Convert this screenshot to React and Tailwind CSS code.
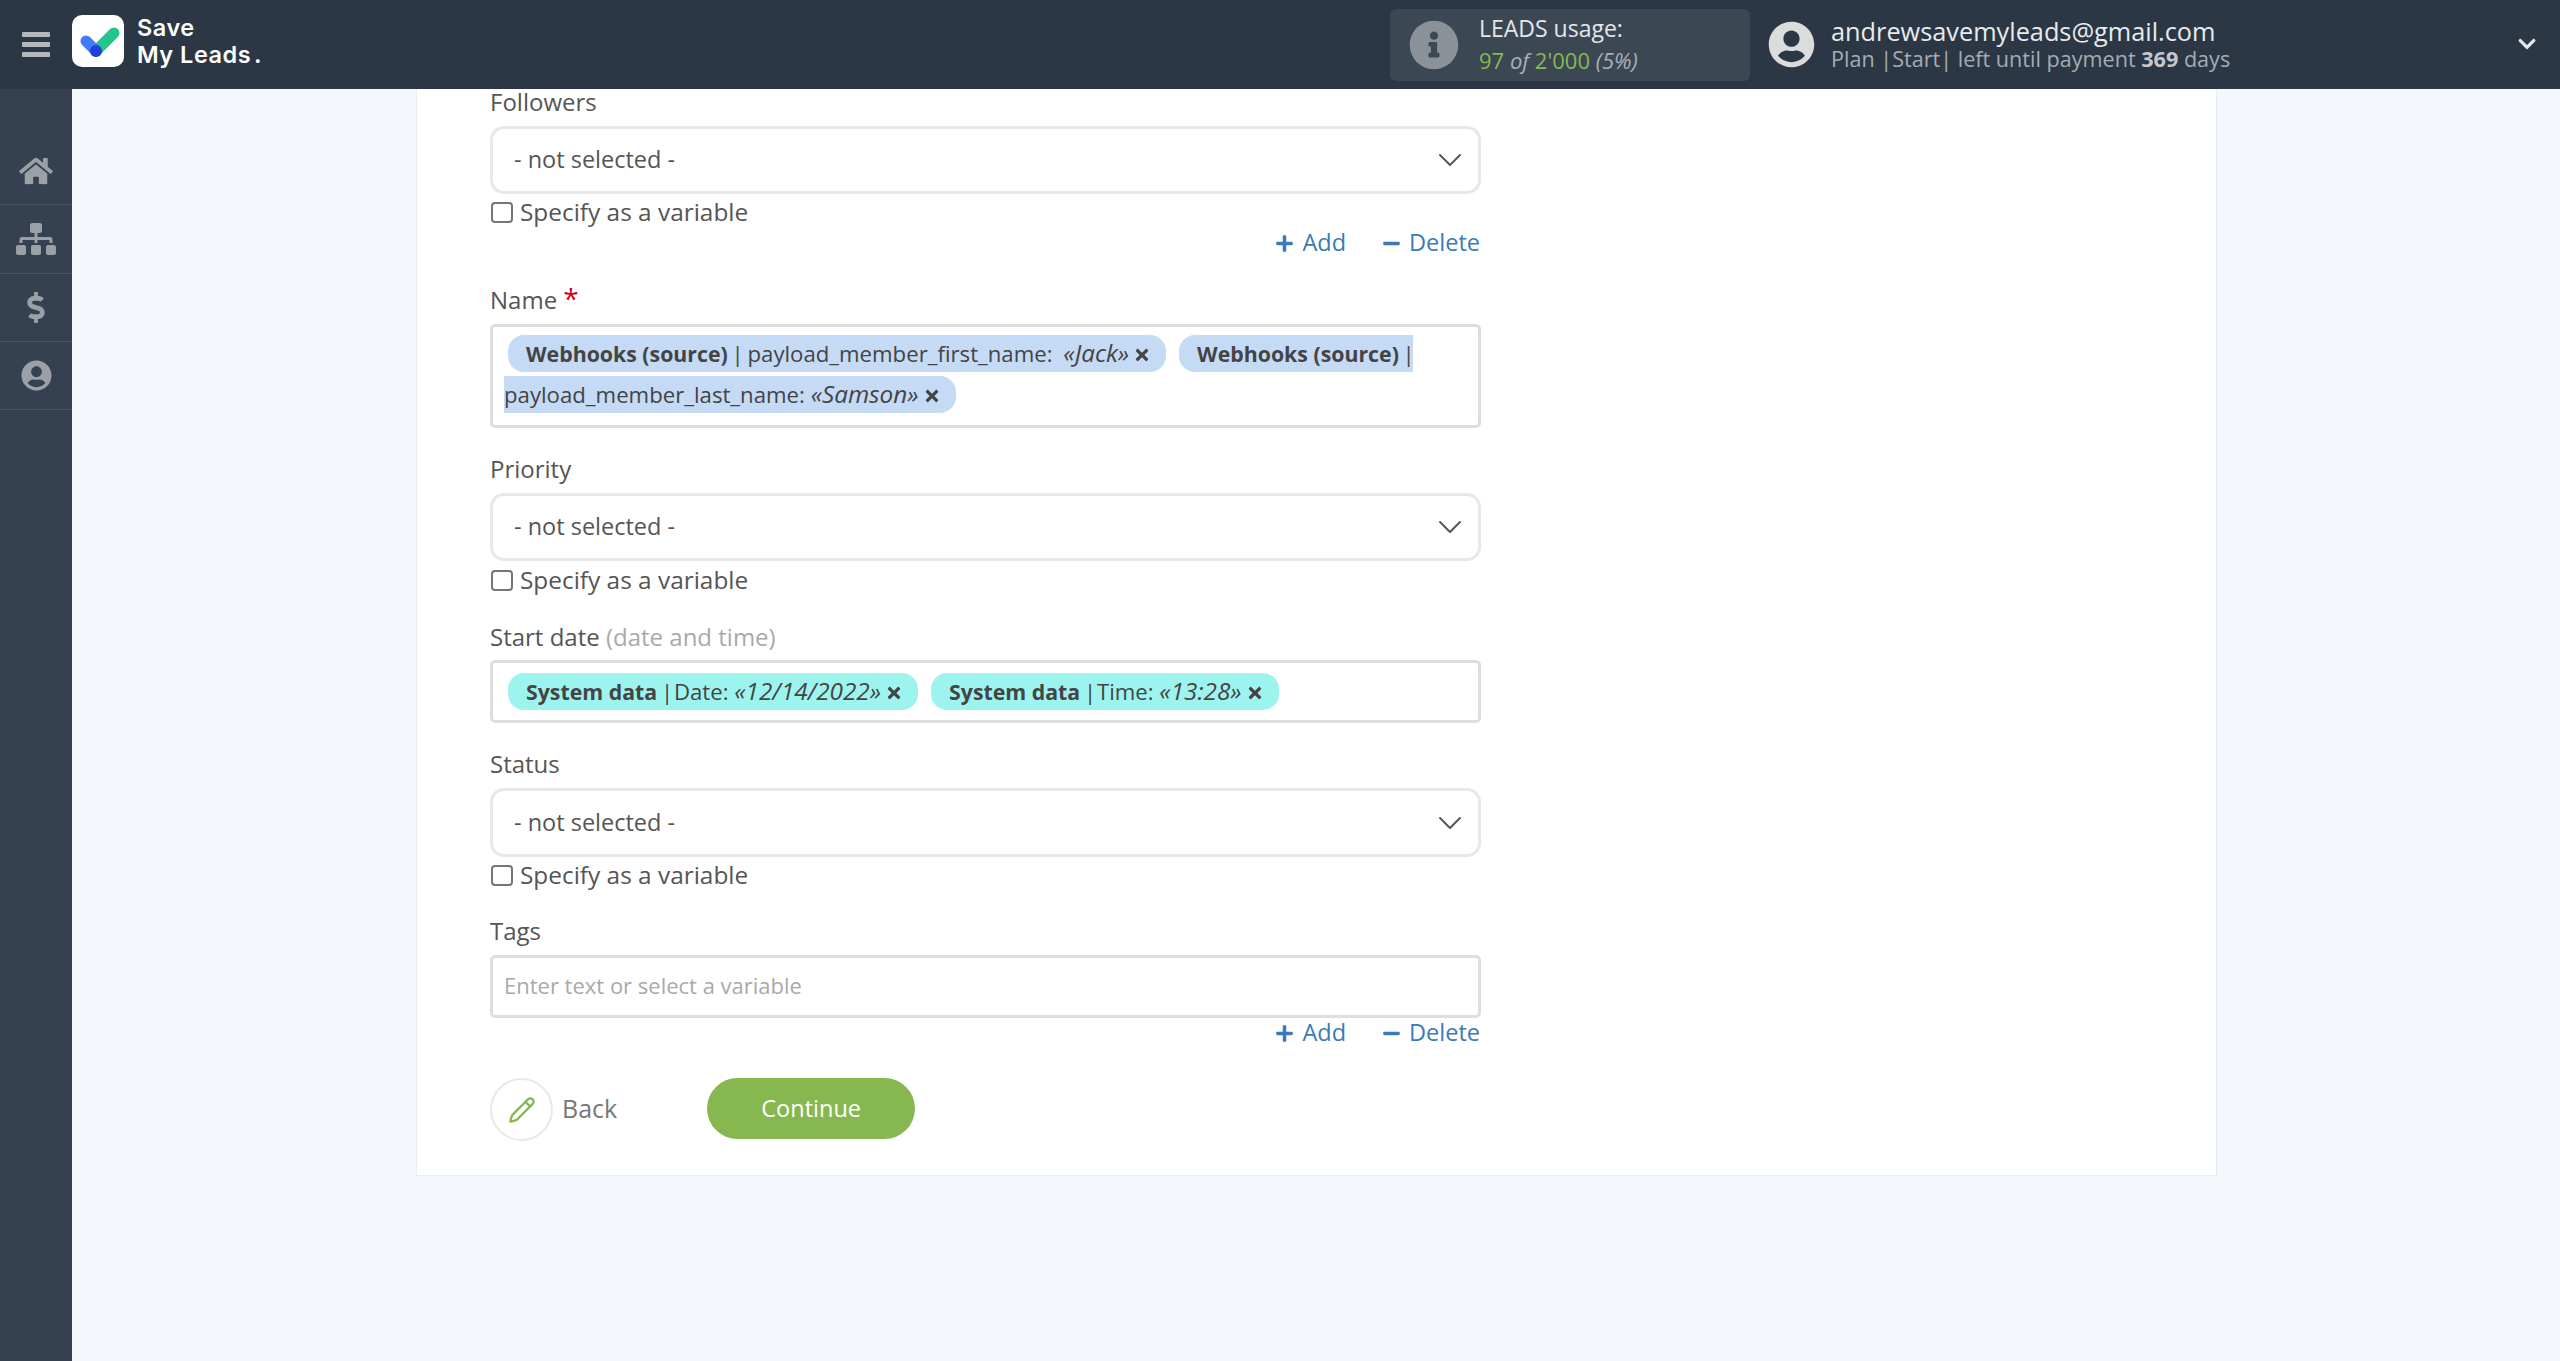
import React from "react";
import { FaHome, FaSitemap, FaDollarSign, FaUserCircle, FaInfoCircle, FaPlus, FaMinus, FaTimes, FaChevronDown } from "react-icons/fa";
import { ChevronDown, Pencil } from "lucide-react";

function Select({ className = "" }) {
  return (
    <div className={`rounded-[14px] border-[3px] border-[#e8e8e8] bg-white flex items-center justify-between pl-[21px] pr-[8px] text-[#555] ${className}`}>
      <span className="text-[23.5px]">- not selected -</span>
      <ChevronDown size={40} strokeWidth={1.15} className="text-[#555]" />
    </div>
  );
}

function Check({ className = "mt-[3px]" }) {
  return (
    <label className={`h-[32px] flex items-center text-[#555] text-[24.4px] ${className}`}>
      <span className="w-[22px] h-[21px] rounded-[4px] border-2 border-[#767676] bg-white ml-[1px] mr-[7px]" />
      Specify as a variable
    </label>
  );
}

function AddDelete({ className = "" }) {
  return (
    <div className={`h-[28px] flex items-center justify-end pr-[1px] text-[#3b7ab8] text-[23.5px] ${className}`}>
      <FaPlus className="w-[19px] h-[19px] mr-[8px]" />
      <span>Add</span>
      <FaMinus className="w-[19px] h-[19px] ml-[36px] mr-[8px]" />
      <span>Delete</span>
    </div>
  );
}

function Label({ children, className = "" }) {
  return <div className={`h-[32px] leading-[32px] text-[24px] text-[#555] ${className}`}>{children}</div>;
}

function Chip({ bg, source, field, value, valueClass = "", fieldClass = "" }) {
  return (
    <span className={`${bg} inline rounded-[16px] py-[3px] pl-[18px] pr-[16px] ml-[4px] mr-[9px] text-[22.2px] text-[#444] box-decoration-slice`}>
      <b className="font-bold text-[21.3px]">{source}</b> <span className="mx-[-2px]">|</span> <span className={fieldClass}>{field}:</span> <i className={`text-[24.3px] ${valueClass}`}>«{value}»</i>
      <FaTimes className="inline w-[16px] h-[18px] ml-[5px] mb-[2px]" />
    </span>
  );
}

function Box({ className = "", children }) {
  return <div className={`rounded-[5px] border-[3px] border-[#dedede] bg-white px-[11px] ${className}`}>{children}</div>;
}

export default function App() {
  return (
    <div className="h-[1361px] w-[2560px] flex flex-col overflow-hidden bg-[#f4f7fc] font-['Open_Sans',sans-serif]">
      <header className="relative z-10 h-[89px] shrink-0 bg-[#2b3744] flex items-center">
        <div className="w-[72px] flex flex-col items-center gap-[5px]">
          <span className="block w-[28px] h-[5px] bg-[#b3b8bd] rounded-[1px]" />
          <span className="block w-[28px] h-[5px] bg-[#b3b8bd] rounded-[1px]" />
          <span className="block w-[28px] h-[5px] bg-[#b3b8bd] rounded-[1px]" />
        </div>
        <div className="w-[52px] h-[52px] rounded-[10px] bg-white flex items-center justify-center mb-[7px]">
          <svg width="52" height="52" viewBox="0 0 52 52">
            <line x1="24" y1="36" x2="42" y2="18" stroke="#22c58b" strokeWidth="11" strokeLinecap="round" />
            <line x1="14" y1="26" x2="24" y2="36" stroke="#3f7bfb" strokeWidth="11" strokeLinecap="round" />
            <circle cx="24" cy="36" r="6" fill="#1f3fd6" />
          </svg>
        </div>
        <div className="ml-[13px] mb-[7px] font-['Inter',sans-serif] font-semibold text-white text-[23.5px] leading-[27px] tracking-[0.5px]">
          <div>Save</div>
          <div>My Leads<span className="ml-[3px]">.</span></div>
        </div>
        <div className="flex-1" />
        <div className="w-[360px] h-[72px] rounded-[6px] bg-[#3b4853] flex items-center mr-[18px]">
          <FaInfoCircle className="ml-[19px] w-[50px] h-[50px] text-[#8a9298]" />
          <div className="ml-[20px] leading-[30px]">
            <div className="text-[#e4e6e8] text-[23px] mt-[-2px] mb-[2px]">LEADS usage:</div>
            <div className="text-[#a9b0b6] text-[22px] italic">
              <span className="text-[#86b84f] not-italic">97</span> of <span className="text-[#86b84f] not-italic">2'000</span> (5%)
            </div>
          </div>
        </div>
        <FaUserCircle className="w-[47px] h-[47px] text-[#dcdcdc]" />
        <div className="ml-[16px] w-[383px] whitespace-nowrap leading-[28px]">
          <div className="text-[#e8eaec] text-[25.3px]">andrewsavemyleads@gmail.com</div>
          <div className="text-[#a4acb4] text-[21.6px]">Plan |Start| left until payment <b className="text-[#c4c8cc]">369</b> days</div>
        </div>
        <div className="w-[301px]" />
        <FaChevronDown className="w-[24px] h-[20px] text-[#e4e6e8] mr-[21px] mt-[-2px]" />
      </header>

      <div className="flex-1 flex min-h-0">
        <aside className="w-[72px] shrink-0 bg-[#354150] pt-[48px] text-[#9aa0a6]">
          {[
            <FaHome className="w-[36px] h-[30px]" />,
            <FaSitemap className="w-[40px] h-[32px]" />,
            <FaDollarSign className="w-[32px] h-[31px]" />,
            <FaUserCircle className="w-[31px] h-[31px]" />,
          ].map((ic, i) => (
            <div key={i} className="h-[68.33px] flex items-center justify-center border-b border-[#4b5664]">{ic}</div>
          ))}
        </aside>

        <main className="flex-1 pl-[344px] items-start flex">
          <div className="w-[1801px] bg-white border-x border-b border-[#e9ecf0] pl-[73px] pb-[34px]">
            <div className="w-[991px]">
              <Label className="mt-[-3px] mb-[8px]">Followers</Label>
              <Select className="h-[68px]" />
              <Check className="mt-[2px]" />
              <AddDelete className="mt-[1px]" />

              <Label className="mt-[27px] mb-[8px]">Name <span className="text-[#d0021b] text-[28px] leading-none">*</span></Label>
              <Box className="h-[104px] pt-[6px] leading-[40px] text-[21px]">
                <Chip bg="bg-[#c5daf5]" source="Webhooks (source)" field="payload_member_first_name" value="Jack" valueClass="pl-[5px]" />
                <Chip bg="bg-[#c5daf5]" source="Webhooks (source)" field="payload_member_last_name" value="Samson" />
              </Box>

              <Label className="mt-[25px] mb-[8px]">Priority</Label>
              <Select className="h-[68px]" />
              <Check />

              <Label className="mt-[25px] mb-[7px]">Start date <span className="text-[#a9a9a9]">(date and time)</span></Label>
              <Box className="h-[63px] pt-[7px] leading-[41px] text-[21px]">
                <Chip bg="bg-[#9df4ee]" source="System data" field="Date" value="12/14/2022" fieldClass="ml-[-3px]" />
                <Chip bg="bg-[#9df4ee]" source="System data" field="Time" value="13:28" fieldClass="ml-[-3px]" />
              </Box>

              <Label className="mt-[25px] mb-[8px]">Status</Label>
              <Select className="h-[69px]" />
              <Check className="mt-[2px]" />

              <Label className="mt-[24px] mb-[8px]">Tags</Label>
              <Box className="h-[63px] flex items-center px-[11px]">
                <span className="text-[22px] text-[#a9a9a9] mt-[-2px]">Enter text or select a variable</span>
              </Box>
              <AddDelete className="mt-[1px]" />

              <div className="mt-[31px] flex items-center">
                <div className="w-[63px] h-[63px] rounded-full border-2 border-[#e3ecea] flex items-center justify-center">
                  <Pencil size={28} strokeWidth={2} className="text-[#86b84f]" />
                </div>
                <span className="ml-[9px] text-[25px] text-[#777] mb-[2px]">Back</span>
                <button className="ml-[90px] w-[208px] h-[61px] rounded-full bg-[#87b84f] text-white text-[23.5px] mb-[2px]">Continue</button>
              </div>
            </div>
          </div>
        </main>
      </div>
    </div>
  );
}
